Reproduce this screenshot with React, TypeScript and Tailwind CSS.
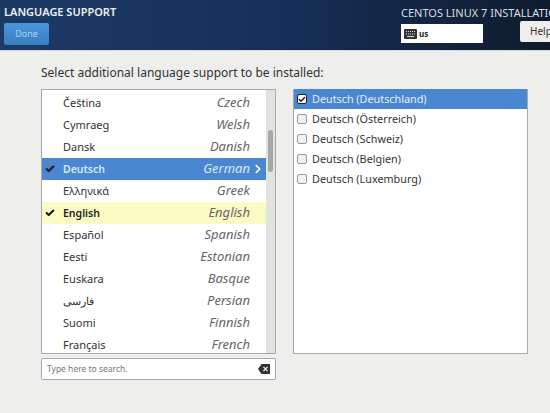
import { Check, ChevronRight } from 'lucide-react'

const langs = [
  { name: 'Čeština', en: 'Czech' },
  { name: 'Cymraeg', en: 'Welsh' },
  { name: 'Dansk', en: 'Danish' },
  { name: 'Deutsch', en: 'German', active: true },
  { name: 'Ελληνικά', en: 'Greek' },
  { name: 'English', en: 'English', installed: true },
  { name: 'Español', en: 'Spanish' },
  { name: 'Eesti', en: 'Estonian' },
  { name: 'Euskara', en: 'Basque' },
  { name: 'فارسی', en: 'Persian' },
  { name: 'Suomi', en: 'Finnish' },
  { name: 'Français', en: 'French' },
]

const locales = ['Deutsch (Deutschland)', 'Deutsch (Österreich)', 'Deutsch (Schweiz)', 'Deutsch (Belgien)', 'Deutsch (Luxemburg)']

function KeyboardIcon() {
  return (
    <svg width="13" height="10" viewBox="0 0 13 10">
      <rect x="0" y="0" width="13" height="10" rx="1" fill="#333" />
      <path d="M2 2.5h9M2 5h9" stroke="#ddd" strokeWidth="1" strokeDasharray="1 1" />
      <path d="M3 7.5h7" stroke="#ddd" strokeWidth="1" />
    </svg>
  )
}

function ClearIcon() {
  return (
    <svg width="12" height="10" viewBox="0 0 12 10">
      <path d="M3.5 0H12V10H3.5L0 5Z" fill="#333" />
      <path d="M5.5 2.8l4 4.4M9.5 2.8l-4 4.4" stroke="#fff" strokeWidth="1.2" />
    </svg>
  )
}

function LangRow({ lang }: { lang: (typeof langs)[number] }) {
  const rowColor = lang.active ? 'bg-[#4a87d0] text-[#d5e9fb] font-semibold text-[10.5px]' : lang.installed ? 'bg-[#fbfbc4] text-[#222] font-semibold text-[10.5px]' : 'text-[#333] text-[11px]'
  const enColor = lang.active ? 'text-[#d5e9fb]' : 'text-[#666]'
  const marked = lang.active || lang.installed
  return (
    <div className={`flex h-[22px] shrink-0 items-center ${rowColor}`}>
      <span className="flex w-[21px] justify-start pl-[3px]">
        {marked && <Check size={10} strokeWidth={5} className="text-[#1a1a1a]" />}
      </span>
      <span className={marked ? 'pt-[2px]' : ''}>{lang.name}</span>
      <span className={`ml-auto text-[13px] font-normal italic ${enColor}`}>{lang.en}</span>
      <span className="flex w-[16px] justify-center">
        {lang.active && <ChevronRight size={14} strokeWidth={3} className="text-white" />}
      </span>
    </div>
  )
}

export default function App() {
  return (
    <div className="flex h-[413px] w-[550px] flex-col overflow-hidden bg-[#eeeeec] font-['Noto_Sans',sans-serif]">
      <header className="flex h-[51px] shrink-0 justify-between border-b border-[#d8d8d8] bg-gradient-to-r from-[#1d3a66] via-[#16305a] to-[#0f1b2c] pl-[4px]">
        <div>
          <h1 className="mt-[5px] text-[11px] leading-[14px] font-semibold text-[#eef1f5]">LANGUAGE SUPPORT</h1>
          <button className="mt-[1px] h-[22px] w-[45px] rounded-[2px] bg-gradient-to-b from-[#4d95dc] to-[#3a7dc4] text-[9px] text-[#a9d4f7]">Done</button>
        </div>
        <div className="w-[149px] shrink-0 overflow-hidden">
          <p className="mt-[6px] text-[11px] leading-[14px] whitespace-nowrap text-[#d9dde2]">CENTOS LINUX 7 INSTALLATION</p>
          <div className="mt-[4px] flex gap-[37px]">
            <div className="flex h-[19px] w-[82px] shrink-0 items-center gap-[2px] bg-white pl-[3px] text-[8px] font-bold text-[#222]">
              <KeyboardIcon />
              us
            </div>
            <button className="-mt-[3px] h-[21px] w-[40px] shrink-0 rounded-[2px] bg-[#eeeeec] pl-[10px] text-left text-[10px] text-[#333]">Help!</button>
          </div>
        </div>
      </header>
      <main className="flex flex-col px-[41px] pt-[14px]">
        <p className="text-[12px] leading-[16px] text-[#2e3436]">Select additional language support to be installed:</p>
        <div className="mt-[8px] flex gap-[17px]">
          <div className="w-[235px] shrink-0">
            <div className="flex h-[265px] border border-[#a9a9a9] bg-white">
              <div className="flex min-w-0 flex-1 flex-col overflow-hidden pt-[2px]">
                {langs.map((l) => <LangRow key={l.en} lang={l} />)}
              </div>
              <div className="w-[9px] shrink-0 bg-[#e2e2e0] px-[2px] pt-[40px]">
                <div className="h-[42px] rounded-full bg-[#a6a8a8]" />
              </div>
            </div>
            <div className="mt-[4px] flex h-[22px] items-center justify-between rounded-[2px] border border-[#a9a9a9] bg-white pl-[5px] pr-[5px] text-[8.5px] text-[#777]">
              Type here to search.
              <ClearIcon />
            </div>
          </div>
          <div className="h-[265px] w-[235px] shrink-0 border border-[#a9a9a9] bg-white">
            <div className="-mt-[1px]">
              {locales.map((l, i) => (
                <div key={l} className={`flex h-[20px] items-center gap-[5px] pl-[3px] text-[10.8px] ${i === 0 ? 'bg-[#4a87d0] text-[#e2effb]' : 'text-[#333]'}`}>
                  <span className={`flex h-[10px] w-[10px] items-center justify-center rounded-[2px] border ${i === 0 ? 'border-[#222] bg-white' : 'border-[#9a9a9a] bg-[#f2f2f2]'}`}>
                    {i === 0 && <Check size={9} strokeWidth={4} className="text-[#111]" />}
                  </span>
                  {l}
                </div>
              ))}
            </div>
          </div>
        </div>
      </main>
    </div>
  )
}
